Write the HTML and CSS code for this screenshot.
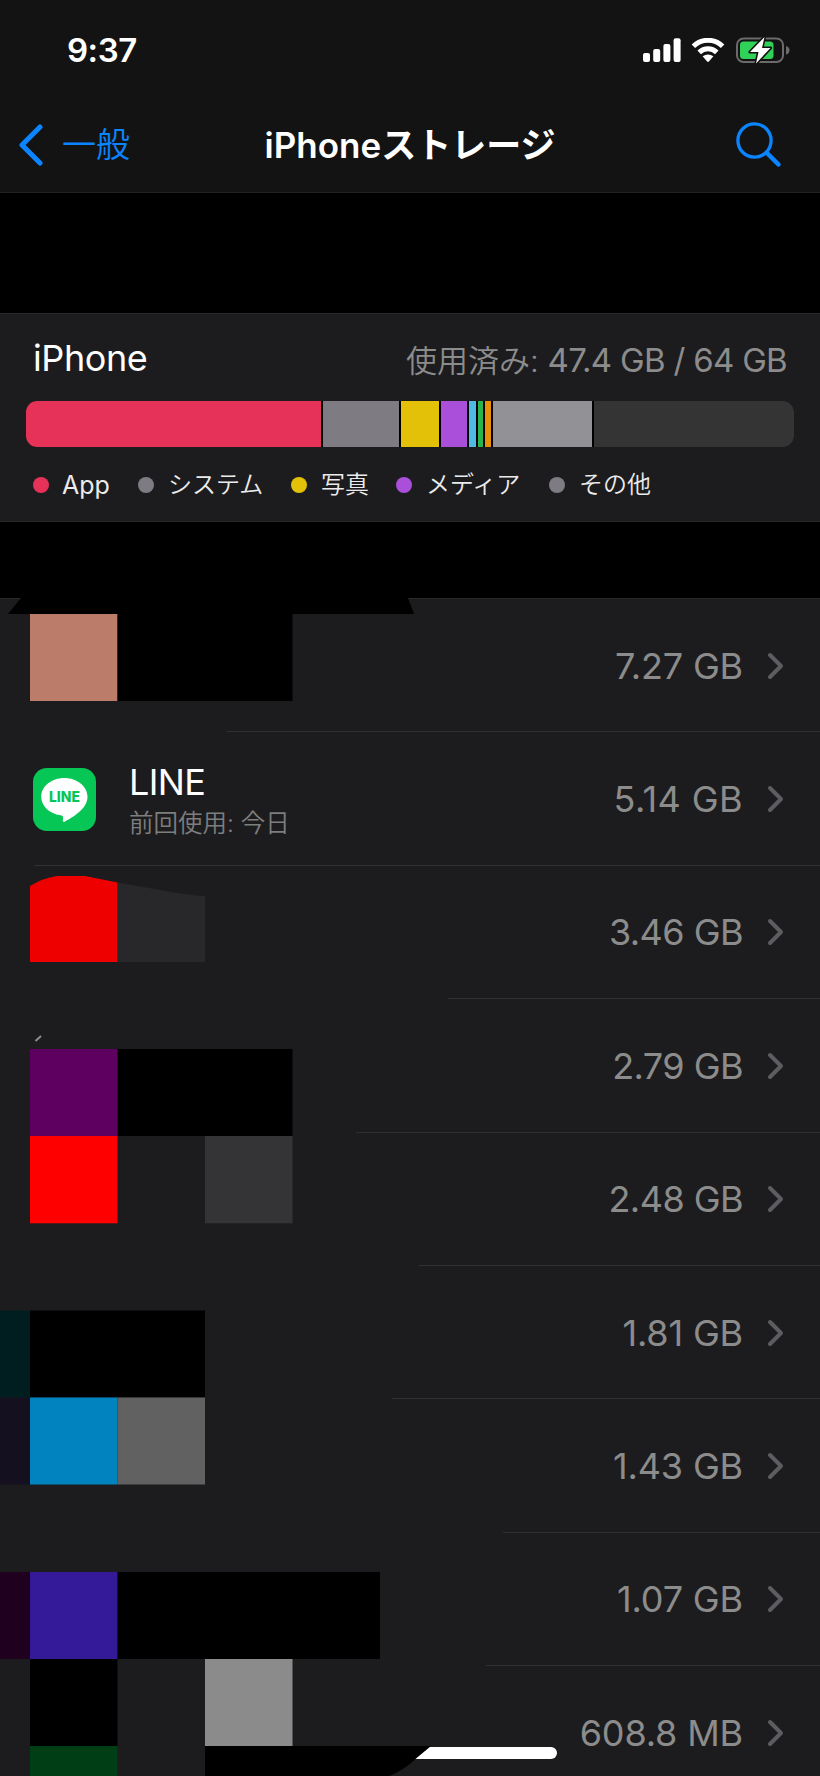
FILE: index.html
```html
<!DOCTYPE html>
<html lang="ja">
<head>
<meta charset="utf-8">
<title>iPhoneストレージ</title>
<link rel="stylesheet" href="styles.css">
</head>
<body>
<div class="screen">
  <header class="header">
    <div class="status">
      <span class="time">9:37</span>
      <div class="status-icons">
        <svg class="signal" width="38" height="24" viewBox="0 0 38 24" fill="#fff"><rect x="0" y="15" width="7" height="9" rx="2"/><rect x="10.2" y="11" width="7" height="13" rx="2"/><rect x="20.4" y="6" width="7" height="18" rx="2"/><rect x="30.6" y="0.3" width="7" height="23.7" rx="2"/></svg>
        <svg class="wifi" width="34" height="25" viewBox="0 0 34 25"><g fill="none" stroke="#fff" stroke-width="5"><path d="M2.4 8.2A21 21 0 0 1 31.6 8.2"/><path d="M8.2 14.4A12.6 12.6 0 0 1 25.8 14.4"/></g><path d="M11.6 18.3Q17 14.5 22.4 18.3L17.9 23.5Q17 24.4 16.1 23.5Z" fill="#fff"/></svg>
        <svg class="battery" width="54" height="28" viewBox="0 0 54 28"><rect x="1" y="2.5" width="46" height="23.4" rx="6.5" fill="none" stroke="#6b6b6b" stroke-width="2"/><path d="M50 10q3.500 1 3.500 4.300t-3.500 4.300z" fill="#6b6b6b"/><rect x="4" y="5.500" width="33.500" height="17.500" rx="3.500" fill="#30d158"/><path d="M28.500 1L14 16H22.500L20 27.500L34.500 12H26Z" fill="#fff" stroke="#131313" stroke-width="3.200" stroke-linejoin="round" paint-order="stroke"/></svg>
      </div>
    </div>
    <nav class="nav">
      <div class="back">
        <svg width="26" height="42" viewBox="0 0 26 42"><path d="M22 3L4 21L22 39" fill="none" stroke="#0a84ff" stroke-width="5" stroke-linecap="round" stroke-linejoin="round"/></svg>
        <span class="back-label">一般</span>
      </div>
      <h1 class="title">iPhoneストレージ</h1>
      <svg class="search" width="46" height="46" viewBox="0 0 46 46" fill="none" stroke="#0a84ff" stroke-linecap="round"><circle cx="18.500" cy="18.500" r="16.600" stroke-width="3.300"/><path d="M31 31L42.500 42.500" stroke-width="4.500"/></svg>
    </nav>
  </header>

  <section class="usage">
    <div class="usage-head">
      <span class="device">iPhone</span>
      <span class="used">使用済み: <span class="used-num">47.4 GB / 64 GB</span></span>
    </div>
    <div class="bar">
      <i class="seg app"></i><i class="seg system"></i><i class="seg photo"></i><i class="seg media"></i><i class="seg cyan"></i><i class="seg green"></i><i class="seg orange"></i><i class="seg other"></i><i class="seg free"></i>
    </div>
    <div class="legend">
      <span class="key latin"><i class="dot app"></i>App</span>
      <span class="key"><i class="dot system"></i>システム</span>
      <span class="key"><i class="dot photo"></i>写真</span>
      <span class="key"><i class="dot media"></i>メディア</span>
      <span class="key"><i class="dot system"></i>その他</span>
    </div>
  </section>

  <main class="list">
    <div class="row s0"><span class="size">7.27 GB</span><svg class="chev" viewBox="0 0 18 28"><path d="M3 3L14 14L3 25"/></svg></div>
    <div class="row s1">
      <svg class="app-icon" width="63" height="63" viewBox="0 0 63 63"><rect width="63" height="63" rx="14" fill="#06c755"/><path d="M31.300 10C18.500 10 8.200 18.300 8.200 28.700C8.200 38 16.500 45.600 27.500 47.200C30.500 47.700 30.300 49.200 29.800 52.500C29.600 54 30.800 54.300 32.500 53.200C38 50 54.500 41.500 54.500 28.700C54.500 18.300 44 10 31.300 10Z" fill="#fff"/><text x="31.500" y="34" text-anchor="middle" textLength="31" lengthAdjust="spacingAndGlyphs" class="icon-text">LINE</text></svg>
      <div class="app-info"><div class="app-name">LINE</div><div class="app-sub">前回使用: 今日</div></div>
      <span class="size loose">5.14 GB</span><svg class="chev" viewBox="0 0 18 28"><path d="M3 3L14 14L3 25"/></svg></div>
    <div class="row s2"><span class="size tight">3.46 GB</span><svg class="chev" viewBox="0 0 18 28"><path d="M3 3L14 14L3 25"/></svg></div>
    <div class="row s3"><span class="size tight">2.79 GB</span><svg class="chev" viewBox="0 0 18 28"><path d="M3 3L14 14L3 25"/></svg></div>
    <div class="row s4"><span class="size tight">2.48 GB</span><svg class="chev" viewBox="0 0 18 28"><path d="M3 3L14 14L3 25"/></svg></div>
    <div class="row s5"><span class="size">1.81 GB</span><svg class="chev" viewBox="0 0 18 28"><path d="M3 3L14 14L3 25"/></svg></div>
    <div class="row s6"><span class="size">1.43 GB</span><svg class="chev" viewBox="0 0 18 28"><path d="M3 3L14 14L3 25"/></svg></div>
    <div class="row s7"><span class="size">1.07 GB</span><svg class="chev" viewBox="0 0 18 28"><path d="M3 3L14 14L3 25"/></svg></div>
    <div class="row s8"><span class="size">608.8 MB</span><svg class="chev" viewBox="0 0 18 28"><path d="M3 3L14 14L3 25"/></svg></div>
    <div class="home-indicator"></div>
    <svg class="mosaic" width="520" height="1178" viewBox="0 598 520 1178">
      <path d="M21 598L8 614H414L408 598Z" fill="#000"/>
      <rect x="30" y="614" width="87.500" height="87" fill="#bb7c69"/>
      <rect x="117.500" y="614" width="175" height="87" fill="#000"/>
      <path d="M30 886Q43 878 57 876H85L117.500 882.500V962H30Z" fill="#ef0000"/>
      <path d="M117.500 882.500L160 890Q190 895.500 205 896V962H117.500Z" fill="#28282a"/>
      <path d="M35.500 1041L41 1036" fill="none" stroke="#8c8c8c" stroke-width="2"/>
      <rect x="30" y="1049" width="87.500" height="87" fill="#5d005f"/>
      <rect x="117.500" y="1049" width="175" height="87" fill="#000"/>
      <rect x="30" y="1136" width="87.500" height="87.300" fill="#f00"/>
      <rect x="205" y="1136" width="87.500" height="87.300" fill="#343436"/>
      <rect x="0" y="1310.500" width="30" height="87" fill="#001e1f"/>
      <rect x="30" y="1310.500" width="175" height="87" fill="#000"/>
      <rect x="0" y="1397.500" width="30" height="87" fill="#15101f"/>
      <rect x="30" y="1397.500" width="87.500" height="87" fill="#0083bf"/>
      <rect x="117.500" y="1397.500" width="87.500" height="87" fill="#616161"/>
      <rect x="0" y="1572" width="30" height="87" fill="#1f001f"/>
      <rect x="30" y="1572" width="87.500" height="87" fill="#341999"/>
      <rect x="117.500" y="1572" width="262.500" height="87" fill="#000"/>
      <rect x="30" y="1659" width="87.500" height="87" fill="#000"/>
      <rect x="205" y="1659" width="87.500" height="87" fill="#8b8b8b"/>
      <rect x="30" y="1746" width="87.500" height="30" fill="#003e15"/>
      <path d="M205 1746H431L416 1758.500Q403 1771 389 1776H205Z" fill="#000"/>
    </svg>
  </main>
</div>
</body>
</html>
```
FILE: styles.css
```css
* { box-sizing: border-box; }
body { margin: 0; background: #000; }
.screen { width: 820px; height: 1776px; overflow: hidden; display: flex; flex-direction: column; background: #000; color: #fff; font-family: Inter, "Noto Sans CJK JP", sans-serif; white-space: nowrap; }

.header { height: 193px; background: #131313; border-bottom: 1px solid #222; }
.status { height: 100px; padding: 0 30px 0 67px; display: flex; justify-content: space-between; align-items: center; }
.time { font-size: 33px; font-weight: 600; letter-spacing: -0.5px; line-height: 40px; }
.status-icons { display: flex; align-items: center; }
.wifi { margin-left: 10px; }
.battery { margin-left: 11px; }
.nav { height: 90px; padding: 0 38px 0 18px; display: grid; grid-template-columns: 180px 1fr 180px; align-items: center; }
.back { display: flex; align-items: center; gap: 18px; color: #0a84ff; }
.back-label { font-size: 34px; font-weight: 350; line-height: 44px; }
.title { margin: 0; padding-left: 20px; text-align: center; font-size: 35px; font-weight: 600; line-height: 44px; }
.search { justify-self: end; }

.usage { height: 209px; margin-top: 120px; padding: 0 26px; background: #1c1c1e; border-top: 1px solid #29292b; border-bottom: 1px solid #29292b; }
.usage-head { height: 87px; padding: 1px 7px 0; display: flex; justify-content: space-between; align-items: center; }
.device { font-size: 36px; letter-spacing: -0.4px; }
.used { font-size: 31px; font-weight: 350; color: #8c8c8c; }
.used-num { font-size: 33px; font-weight: 400; letter-spacing: -0.7px; }
.bar { height: 46px; border-radius: 11px; overflow: hidden; background: #000; display: grid; grid-template-columns: 294.500px 76.500px 37.500px 26.500px 7px 4.500px 6.500px 98.500px 1fr; column-gap: 2px; }
.app { background: #e63158; }
.system { background: #7e7c82; }
.photo { background: #e3c109; }
.media { background: #a94fda; }
.cyan { background: #51b9e4; }
.green { background: #29b44c; }
.orange { background: #e99007; }
.other { background: #929196; }
.free { background: #343434; }
.legend { padding: 20px 0 0 7px; display: grid; grid-template-columns: 105px 153px 105px 153px auto; font-size: 24px; line-height: 36px; color: #ebebeb; }
.key { display: flex; align-items: center; gap: 14px; font-weight: 350; }
.latin { font-size: 25px; font-weight: 400; gap: 13px; }
.dot { width: 16px; height: 16px; border-radius: 50%; }

.list { position: relative; height: 1178px; margin-top: 76px; border-top: 1px solid #29292b; background: #1c1c1e; }
.row { height: 133.400px; padding: 2px 35px 0 33px; display: flex; align-items: center; justify-content: flex-end; background: linear-gradient(#303032, #303032) no-repeat right top / 0 1px; }
.s0 { height: 132.400px; }
.s1 { background-size: 593px 1px; }
.s2 { background-size: 786px 1px; }
.s3 { background-size: 372px 1px; }
.s4 { background-size: 464px 1px; }
.s5 { background-size: 401px 1px; }
.s6 { background-size: 428px 1px; }
.s7 { background-size: 317px 1px; }
.s8 { background-size: 334px 1px; }
.size { font-size: 36px; line-height: 44px; color: #8c8c8c; letter-spacing: -0.15px; }
.tight { letter-spacing: -0.55px; }
.loose { letter-spacing: 0.4px; }
.chev { width: 18px; height: 28px; margin-left: 24px; fill: none; stroke: #5d5d61; stroke-width: 4; stroke-linecap: round; stroke-linejoin: round; }
.app-icon { flex: none; }
.icon-text { font: 800 14px Inter, sans-serif; fill: #06c755; }
.app-info { padding-top: 4px; margin-left: 33px; margin-right: auto; }
.app-name { font-size: 36px; line-height: 42px; letter-spacing: -0.6px; }
.app-sub { padding-top: 2px; font-size: 24.500px; line-height: 36px; font-weight: 350; color: #7e7e7e; }
.home-indicator { position: absolute; left: 263px; top: 1148px; width: 294px; height: 12px; border-radius: 6px; background: #fff; }
.mosaic { position: absolute; left: 0; top: -1px; }
```
